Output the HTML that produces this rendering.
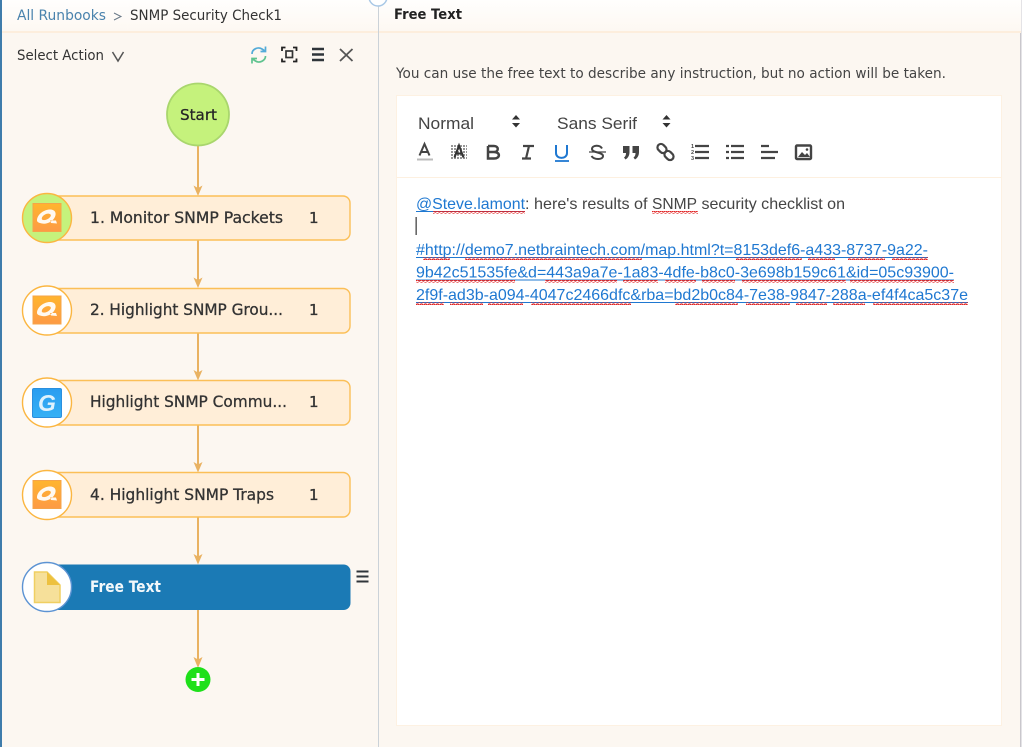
<!DOCTYPE html>
<html><head><meta charset="utf-8"><style>
html,body{margin:0;padding:0;width:1024px;height:747px;overflow:hidden;background:#fff}
svg{display:block;position:absolute;left:0;top:0;filter:blur(.35px)}
text{white-space:pre}
.o{font-family:"DejaVu Sans",sans-serif}
.a{font-family:"Liberation Sans",sans-serif}
.n{stroke:#333;stroke-width:.3px}
</style></head><body>
<svg width="1024" height="747" viewBox="0 0 1024 747" xmlns="http://www.w3.org/2000/svg">
<defs>
<pattern id="sq" width="4" height="3" patternUnits="userSpaceOnUse"><path d="M0 2 L1 1 L2 1 L3 2 L4 2" fill="none" stroke="#e01f1f" stroke-width="1.200"/></pattern>
<linearGradient id="or" x1="0" y1="0" x2="0" y2="1"><stop offset="0" stop-color="#ffb52e"/><stop offset="1" stop-color="#fd9a45"/></linearGradient>
<linearGradient id="bl" x1="0" y1="0" x2="0" y2="1"><stop offset="0" stop-color="#2a9df0"/><stop offset="1" stop-color="#35b0f5"/></linearGradient>
<linearGradient id="hd" x1="0" y1="0" x2="0" y2="1"><stop offset="0" stop-color="#fffefd"/><stop offset="1" stop-color="#fdf8f2"/></linearGradient>
<g id="q"><rect x="-14" y="-14" width="28" height="28" fill="url(#or)" stroke="#f5a44a" stroke-width="1"/>
<path d="M-10 3 C-10 -3 -3 -8 3 -8 C9 -8 10 -3 7 1 C5 4 0 7 -5 6 C-8 5.500 -10 4.500 -10 3 Z M-5 2 C-3 3.500 1.500 2 3.500 -1 C5 -3.500 1.500 -4.500 -1 -3.500 C-3.500 -2.500 -6 0 -5 2 Z M3 3 L9 3 L10 6 L4 5.500 Z" fill="#fff" fill-rule="evenodd" opacity=".93"/></g>
</defs>

<rect width="1021" height="747" fill="#fcf7f1"/>
<rect x="1020" y="0" width="1.500" height="747" fill="#c9c7cc"/>
<rect x="0" y="0" width="1021" height="32" fill="url(#hd)"/>
<rect x="0" y="31" width="1021" height="2" fill="#fdeedd"/>
<rect x="0" y="0" width="2" height="747" fill="#3f7cab"/>
<rect x="378" y="0" width="1" height="747" fill="#cbd2d8"/>
<circle cx="378" cy="-3" r="9" fill="#fff" stroke="#a9c8e6" stroke-width="1.500"/>

<!-- breadcrumb -->
<text class="o" x="17" y="20" font-size="14.500" fill="#4a83ad" textLength="89" lengthAdjust="spacingAndGlyphs">All Runbooks</text>
<path d="M114 13 L121 16.500 L114 20" fill="none" stroke="#6a7a88" stroke-width="1"/>
<text class="o" x="130" y="20" font-size="14.500" fill="#333" textLength="152" lengthAdjust="spacingAndGlyphs">SNMP Security Check1</text>

<text class="o" x="17" y="60" font-size="14.500" fill="#333" textLength="87" lengthAdjust="spacingAndGlyphs">Select Action</text>
<path d="M112.500 52 L118 61 L123.500 52" fill="none" stroke="#555" stroke-width="1.500"/>

<!-- refresh icon -->
<path d="M252 54 C252 49 258 46.500 262 49 L265 51 M265.500 46.500 L265.500 51.500 L260.500 51.500" fill="none" stroke="#53abd8" stroke-width="1.700"/>
<path d="M265.500 56 C265.500 61 259 63.500 255.500 61 L252.500 59 M252 63.500 L252 58.500 L257 58.500" fill="none" stroke="#5fc38f" stroke-width="1.700"/>
<!-- focus icon -->
<path d="M282 51 L282 47.500 L285.500 47.500 M293 47.500 L296.500 47.500 L296.500 51 M296.500 58.500 L296.500 61.500 L293 61.500 M285.500 61.500 L282 61.500 L282 58.500" fill="none" stroke="#222" stroke-width="1.800"/>
<rect x="286" y="51" width="6.500" height="6.500" fill="none" stroke="#333" stroke-width="1.700"/>
<!-- menu -->
<path d="M312 49 H324 M312 54.500 H324 M312 60 H324" stroke="#2f353a" stroke-width="2.400"/>
<!-- close -->
<path d="M340 49 L352.500 61 M352.500 49 L340 61" stroke="#555" stroke-width="1.800"/>

<!-- connectors -->
<g stroke="#e9b262" stroke-width="2" fill="none">
<path d="M198 146 V190 M198 240 V283 M198 333 V375 M198 425 V467 M198 517 V559 M198 610 V665"/>
</g>
<g fill="#e9b262">
<path d="M193.500 185.500 L198 188 L202.500 185.500 L198 196 Z"/>
<path d="M193.500 277.500 L198 280 L202.500 277.500 L198 288 Z"/>
<path d="M193.500 370 L198 372.500 L202.500 370 L198 380.500 Z"/>
<path d="M193.500 462 L198 464.500 L202.500 462 L198 472.500 Z"/>
<path d="M193.500 554 L198 556.500 L202.500 554 L198 564.500 Z"/>
<path d="M193.500 657 L198 659.500 L202.500 657 L198 668 Z"/>
</g>

<!-- start -->
<circle cx="198" cy="114.500" r="31" fill="#c5f27c" stroke="#a9d66d" stroke-width="1.800"/>
<text class="o n" x="180" y="120" font-size="15.500" fill="#222" textLength="37" lengthAdjust="spacingAndGlyphs">Start</text>

<!-- node 1 -->
<rect x="40" y="196" width="310" height="44" rx="7" fill="#ffeed8" stroke="#fbbf57" stroke-width="1.400"/>
<circle cx="47" cy="218" r="24.500" fill="#c5f27c" stroke="#fbb641" stroke-width="1.400"/>
<use href="#q" x="47" y="217.500"/>
<text class="o n" x="90" y="223" font-size="16" fill="#333" textLength="193" lengthAdjust="spacingAndGlyphs">1. Monitor SNMP Packets</text>
<text class="o n" x="309" y="223" font-size="15" fill="#333">1</text>

<!-- node 2 -->
<rect x="40" y="288.500" width="310" height="44.500" rx="7" fill="#ffeed8" stroke="#fbbf57" stroke-width="1.400"/>
<circle cx="47" cy="310.500" r="24.500" fill="#fff" stroke="#fbb641" stroke-width="1.400"/>
<use href="#q" x="47" y="310"/>
<text class="o n" x="90" y="315" font-size="16" fill="#333" textLength="193" lengthAdjust="spacingAndGlyphs">2. Highlight SNMP Grou...</text>
<text class="o n" x="309" y="315" font-size="15" fill="#333">1</text>

<!-- node 3 -->
<rect x="40" y="380.500" width="310" height="44.500" rx="7" fill="#ffeed8" stroke="#fbbf57" stroke-width="1.400"/>
<circle cx="47" cy="402.500" r="24.500" fill="#fff" stroke="#fbb641" stroke-width="1.400"/>
<rect x="32.500" y="388.500" width="29" height="29" rx="1.500" fill="url(#bl)" stroke="#2b8fde" stroke-width="1"/>
<text class="a" x="38" y="411" font-size="23" font-weight="bold" font-style="italic" fill="#dff2fd">G</text>
<text class="o n" x="90" y="407" font-size="16" fill="#333" textLength="197" lengthAdjust="spacingAndGlyphs">Highlight SNMP Commu...</text>
<text class="o n" x="309" y="407" font-size="15" fill="#333">1</text>

<!-- node 4 -->
<rect x="40" y="472.500" width="310" height="44.500" rx="7" fill="#ffeed8" stroke="#fbbf57" stroke-width="1.400"/>
<circle cx="47" cy="495" r="24.500" fill="#fff" stroke="#fbb641" stroke-width="1.400"/>
<use href="#q" x="47" y="494.500"/>
<text class="o n" x="90" y="500" font-size="16" fill="#333" textLength="184" lengthAdjust="spacingAndGlyphs">4. Highlight SNMP Traps</text>
<text class="o n" x="309" y="500" font-size="15" fill="#333">1</text>

<!-- free text node -->
<rect x="40" y="564.500" width="310.500" height="45.500" rx="7" fill="#1b7ab5"/>
<circle cx="47" cy="587" r="24.500" fill="#fff" stroke="#5c93d3" stroke-width="1.400"/>
<path d="M34.500 572 H47 L60 585 V602.500 H34.500 Z" fill="#f6e09a" stroke="#f0cf62" stroke-width="1.500"/>
<path d="M47 572 L60 585 H47 Z" fill="#edc13f"/>
<text class="o" x="90" y="592" font-size="16" font-weight="bold" fill="#f3f8fb" textLength="71" lengthAdjust="spacingAndGlyphs">Free Text</text>
<path d="M356.500 571.500 H368.500 M356.500 576.500 H368.500 M356.500 581.500 H368.500" stroke="#2f353a" stroke-width="2"/>

<!-- plus -->
<circle cx="198" cy="679.500" r="12.500" fill="#1ee01a"/>
<path d="M191.500 679.500 H204.500 M198 673 V686" stroke="#fff" stroke-width="3"/>

<!-- right header -->
<text class="o" x="394" y="19" font-size="14" font-weight="bold" fill="#222" textLength="68" lengthAdjust="spacingAndGlyphs">Free Text</text>
<text class="o" x="396" y="78" font-size="14.500" fill="#444" textLength="550" lengthAdjust="spacingAndGlyphs">You can use the free text to describe any instruction, but no action will be taken.</text>

<!-- editor -->
<rect x="396.500" y="95.500" width="605" height="630" fill="#fff" stroke="#fdf1e2" stroke-width="1"/>
<rect x="397" y="177" width="604" height="1" fill="#fdf0e0"/>

<text class="a" x="418" y="129" font-size="16.500" fill="#444" textLength="56" lengthAdjust="spacingAndGlyphs">Normal</text>
<path d="M512 119.500 L516 115 L520 119.500 Z M512 123 L516 127.500 L520 123 Z" fill="#333"/>
<text class="a" x="557" y="129" font-size="16.500" fill="#444" textLength="80" lengthAdjust="spacingAndGlyphs">Sans Serif</text>
<path d="M662.500 119.500 L666.500 115 L670.500 119.500 Z M662.500 123 L666.500 127.500 L670.500 123 Z" fill="#333"/>

<!-- toolbar -->
<g fill="none" stroke="#444" stroke-width="2">
<!-- color -->
<path d="M419.500 155.500 L424.500 144 L429.500 155.500 M421 152 H428" stroke-width="2"/>
<rect x="417" y="158.500" width="16" height="2" fill="#bbb" stroke="none"/>
<!-- bg -->
<path d="M451 146 H467 M451 149 H467 M451 152 H467 M451 155 H467 M451 158 H467" stroke="#888" stroke-width="1.800" stroke-dasharray="2 1"/>
<path d="M454.500 157.500 L459 145.500 L463.500 157.500 M456 153.500 H462" stroke="#333" stroke-width="2"/>
<!-- bold -->
<path d="M488 146 H494 C499 146 499 152 494 152 H488 M494 152 C500.500 152 500.500 158.500 494 158.500 H488 V146" stroke-width="2.500"/>
<!-- italic -->
<path d="M523 146 H534 M522 158.500 H531 M529 146 L526 158.500" stroke-width="2.200"/>
<!-- underline -->
<path d="M556 145 V153 C556 159.500 567 159.500 567 153 V145" stroke="#1f78d1" stroke-width="2"/>
<path d="M555 161 H569" stroke="#1f78d1" stroke-width="1.800"/>
<!-- strike -->
<path d="M602 148.500 C600 144.500 592 145 592 149 C592 153 603 152 603 156 C603 160 594 160 591.500 156" stroke-width="2"/>
<path d="M589 152 H606" stroke-width="1.200"/>
<!-- link -->
<rect x="657" y="145" width="10" height="7" rx="3.500" transform="rotate(45 662 148.500)" stroke-width="2.200"/>
<rect x="664" y="152" width="10" height="7" rx="3.500" transform="rotate(45 669 155.500)" stroke-width="2.200"/>
<!-- ordered -->
<path d="M695 146 H709 M695 152 H709 M695 158 H709" stroke-width="2.200"/>
<!-- bullets -->
<path d="M731 146 H744 M731 152 H744 M731 158 H744" stroke-width="2.200"/>
<path d="M726 146 H729 M726 152 H729 M726 158 H729" stroke-width="2.200"/>
<!-- align -->
<path d="M761 146 H769 M761 152 H778 M761 158 H775" stroke-width="2.200"/>
<!-- image -->
<rect x="796" y="145.500" width="15" height="13.500" rx="1" stroke-width="2.400"/>
</g>
<path d="M798 157 L802 152 L805 155 L807 153 L810 157 Z" fill="#444"/>
<circle cx="807" cy="149.500" r="1.300" fill="#444"/>
<text class="a" x="691" y="148" font-size="5.500" font-weight="bold" fill="#444">1</text>
<text class="a" x="691" y="154" font-size="5.500" font-weight="bold" fill="#444">2</text>
<text class="a" x="691" y="160" font-size="5.500" font-weight="bold" fill="#444">3</text>
<!-- quote icon -->
<path d="M623 146 H629.500 V152 C629.500 155.500 628 158 625.500 159.500 L624 157.500 C625.500 156.500 626 155 626 153 H623 Z M632.500 146 H639 V152 C639 155.500 637.500 158 635 159.500 L633.500 157.500 C635 156.500 635.500 155 635.500 153 H632.500 Z" fill="#444"/>

<!-- editor text -->
<g class="a" font-size="16">
<text class="a" x="416" y="209" font-size="16" fill="#1f78d1" textLength="109" lengthAdjust="spacingAndGlyphs">@Steve.lamont</text>
<text class="a" x="525" y="209" font-size="16" fill="#444" textLength="127" lengthAdjust="spacingAndGlyphs">: here's results of </text>
<text class="a" x="652" y="209" font-size="16" fill="#444" textLength="45" lengthAdjust="spacingAndGlyphs">SNMP</text>
<text class="a" x="697" y="209" font-size="16" fill="#444" textLength="148" lengthAdjust="spacingAndGlyphs"> security checklist on</text>
<text class="a" x="416" y="255" font-size="16" fill="#1f78d1" textLength="512" lengthAdjust="spacingAndGlyphs">#http://demo7.netbraintech.com/map.html?t=8153def6-a433-8737-9a22-</text>
<text class="a" x="416" y="277.500" font-size="16" fill="#1f78d1" textLength="538" lengthAdjust="spacingAndGlyphs">9b42c51535fe&amp;d=443a9a7e-1a83-4dfe-b8c0-3e698b159c61&amp;id=05c93900-</text>
<text class="a" x="416" y="300" font-size="16" fill="#1f78d1" textLength="552" lengthAdjust="spacingAndGlyphs">2f9f-ad3b-a094-4047c2466dfc&amp;rba=bd2b0c84-7e38-9847-288a-ef4f4ca5c37e</text>
</g>
<rect x="415.500" y="217" width="1.300" height="18" fill="#444"/>
<g fill="#1f78d1">
<rect x="416" y="211" width="109" height="1"/>
<rect x="416" y="257" width="512" height="1"/>
<rect x="416" y="279.500" width="538" height="1"/>
<rect x="416" y="302" width="552" height="1"/>
</g>
<g fill="url(#sq)">
<rect x="433" y="211" width="92" height="3"/>
<rect x="652" y="211" width="46" height="3"/>
<rect x="423" y="257" width="27" height="3"/>
<rect x="465" y="257" width="177" height="3"/>
<rect x="736" y="257" width="66" height="3"/>
<rect x="808" y="257" width="27" height="3"/>
<rect x="848" y="257" width="37" height="3"/>
<rect x="892" y="257" width="36" height="3"/>
<rect x="416" y="280" width="99" height="3"/>
<rect x="545" y="280" width="72" height="3"/>
<rect x="623" y="280" width="35" height="3"/>
<rect x="665" y="280" width="31" height="3"/>
<rect x="702" y="280" width="33" height="3"/>
<rect x="742" y="280" width="104" height="3"/>
<rect x="850" y="280" width="104" height="3"/>
<rect x="416" y="302" width="28" height="3"/>
<rect x="450" y="302" width="33" height="3"/>
<rect x="488" y="302" width="35" height="3"/>
<rect x="531" y="302" width="100" height="3"/>
<rect x="675" y="302" width="63" height="3"/>
<rect x="746" y="302" width="44" height="3"/>
<rect x="796" y="302" width="31" height="3"/>
<rect x="833" y="302" width="32" height="3"/>
<rect x="873" y="302" width="95" height="3"/>
</g>
</svg>
</body></html>
